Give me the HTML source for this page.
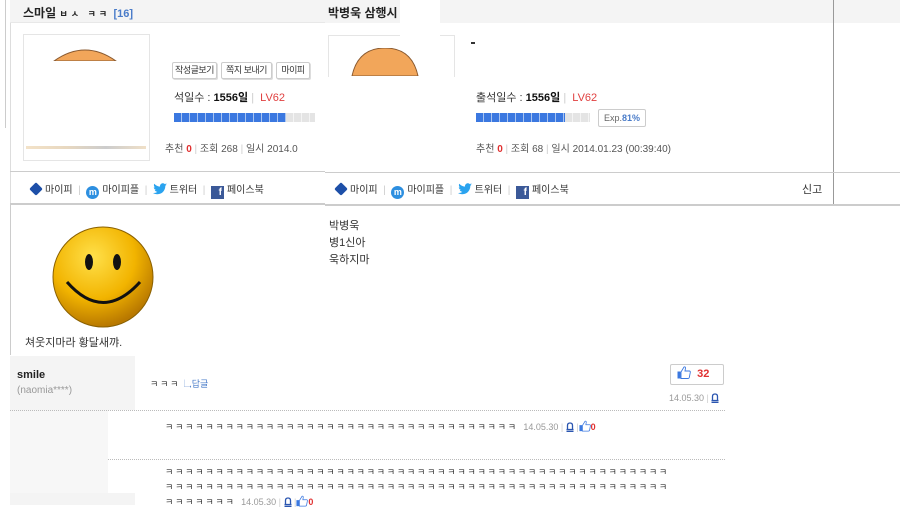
<!DOCTYPE html>
<html><head><meta charset="utf-8">
<style>
*{margin:0;padding:0;box-sizing:border-box}
body{width:900px;height:505px;overflow:hidden;background:#fff;position:relative;font-family:"Liberation Sans","Noto Sans CJK KR","NanumGothic",sans-serif;font-size:11px;color:#333}
.a{position:absolute;white-space:nowrap}
.bar{position:absolute;height:9px;background:repeating-linear-gradient(90deg,#3b78e0 0 7px,#a9c4f0 7px 8px)}
.bare{position:absolute;height:9px;background:repeating-linear-gradient(90deg,#e4e4e4 0 7px,#f4f4f4 7px 8px)}
.btn{position:absolute;height:17px;border:1px solid #ccc;border-radius:2px;font-size:9px;line-height:15px;text-align:center;overflow:hidden;background:#fff;box-shadow:1px 1px 0 #ddd;letter-spacing:-.5px}
.sep{color:#ccc}
.cube{display:inline-block;width:12px;height:12px;background:#1d4fa8;border-radius:2px;transform:rotate(45deg) scale(.8);vertical-align:-2px;margin-right:3px}
.mi{display:inline-block;width:13px;height:13px;border-radius:50%;background:#2d8fe0;color:#fff;font-size:9px;line-height:12px;text-align:center;font-weight:bold;vertical-align:-2px;margin-right:3px}
.fb{display:inline-block;width:13px;height:13px;background:#3b5998;color:#fff;font-size:10px;line-height:14px;text-align:right;padding-right:2px;font-weight:bold;vertical-align:-2px;margin-right:3px}
.k{font-size:9px;letter-spacing:1.8px;color:#333}
.dot{position:absolute;height:0;border-top:1px dotted #bbb}
svg.i{vertical-align:-2px}
</style></head><body>
<svg width="0" height="0" style="position:absolute">
<defs>
<symbol id="tw" viewBox="0 0 14 12"><path d="M14 1.5c-.5.2-1 .4-1.6.4.6-.4 1-.9 1.2-1.5-.6.3-1.1.6-1.8.7C11.3.5 10.6.2 9.8.2 8.3.2 7 1.5 7 3c0 .2 0 .4.1.6C4.8 3.5 2.700 2.400 1.300.7 1 1.100.9 1.600.9 2.100c0 1 .5 1.800 1.200 2.300-.5 0-.9-.1-1.300-.3 0 1.400 1 2.500 2.200 2.800-.4.100-.9.100-1.300 0 .4 1.100 1.400 1.900 2.600 2C3.300 9.600 2 10 .700 10H0c1.200.8 2.700 1.200 4.300 1.200 5.200 0 8-4.300 8-8v-.4c.6-.4 1.100-.9 1.500-1.400z" fill="#2aa3ef"/></symbol>
<symbol id="th" viewBox="0 0 14 13"><rect x="0.5" y="5.5" width="3" height="7" fill="#3b78e0"/><path d="M4 6 L7 1 Q8.500 .500 8.500 2 L8 5 L12.500 5 Q13.500 5.200 13.300 6.300 L12.300 11.500 Q12 12.500 11 12.500 L4 12.500 Z" fill="#fff" stroke="#3b78e0" stroke-width="0.9"/></symbol>
<symbol id="bl" viewBox="0 0 8 10"><path d="M1.500 7.500 V3.500 Q1.500 1 4 1 Q6.500 1 6.500 3.500 V7.500 M0.500 7.500 H7.500 M0.500 9.300 H7.500" fill="none" stroke="#2a55b0" stroke-width="1.300"/></symbol>
</defs></svg>
<!-- header -->
<div class="a" style="left:10px;top:0;width:890px;height:23px;background:#f4f4f4"></div>
<div class="a" style="left:410px;top:0;width:30px;height:25px;background:#fff"></div>
<div class="a" style="left:10px;top:22px;width:315px;height:1px;background:#e8e8e8"></div>
<div class="a" style="left:23px;top:4px;font-size:12px;font-weight:bold;color:#222">스마일 <span style="font-size:9px;letter-spacing:3px">ㅂㅅ ㅋㅋ</span> <span style="color:#4a7cc9;font-size:11px">[16]</span></div>
<div class="a" style="left:328px;top:4px;font-size:12px;font-weight:bold;color:#222">박병욱 삼행시</div>
<!-- vertical lines -->
<div class="a" style="left:5px;top:0;width:1px;height:128px;background:#ccc"></div>
<div class="a" style="left:10px;top:23px;width:1px;height:180px;background:#ddd"></div>
<div class="a" style="left:10px;top:205px;width:1px;height:150px;background:#ccc"></div>
<div class="a" style="left:833px;top:0;width:1px;height:205px;background:#999"></div>
<!-- avatars -->
<div class="a" style="left:23px;top:34px;width:127px;height:127px;border:1px solid #e5e5e5"></div>
<svg class="a" style="left:50px;top:47px" width="70" height="14"><path d="M4 14 Q35 -8 66 14 Z" fill="#f2a65a" stroke="#8a5a30"/></svg>
<div class="a" style="left:26px;top:146px;width:120px;height:3px;background:linear-gradient(90deg,#f3e2c8,#e8d8c0,#ccc,#f0e0c8)"></div>
<div class="a" style="left:328px;top:35px;width:127px;height:42px;border:1px solid #e5e5e5;border-bottom:none"></div>
<div class="a" style="left:400px;top:0;width:40px;height:75px;background:#fff"></div>
<svg class="a" style="left:350px;top:48px" width="70" height="28"><path d="M2 28 Q8 0 35 0 Q62 0 68 28 Z" fill="#f2a65a" stroke="#8a5a30"/></svg>
<div class="a" style="left:471px;top:42px;width:4px;height:2px;background:#333"></div>
<!-- left info -->
<div class="btn" style="left:172px;top:62px;width:45px">작성글보기</div>
<div class="btn" style="left:221px;top:62px;width:51px">쪽지 보내기</div>
<div class="btn" style="left:276px;top:62px;width:34px">마이피</div>
<div class="a" style="left:174px;top:89px;font-size:11px">석일수 : <b style="color:#111">1556일</b> <span class="sep">|</span> &nbsp;<span style="color:#e04040">LV62</span></div>
<div class="bar" style="left:174px;top:113px;width:112px"></div>
<div class="bare" style="left:286px;top:113px;width:29px"></div>
<div class="a" style="left:165px;top:140px;font-size:10px;color:#555">추천 <b style="color:#e03030">0</b> <span class="sep">|</span> 조회 268 <span class="sep">|</span> 일시 2014.0</div>
<!-- right info -->
<div class="a" style="left:476px;top:89px;font-size:11px">출석일수 : <b style="color:#111">1556일</b> <span class="sep">|</span> &nbsp;<span style="color:#e04040">LV62</span></div>
<div class="bar" style="left:476px;top:113px;width:89px"></div>
<div class="bare" style="left:565px;top:113px;width:25px"></div>
<div class="a" style="left:598px;top:109px;height:18px;border:1px solid #ccc;border-radius:2px;padding:0 5px;font-size:9px;line-height:16px;color:#666">Exp.<b style="color:#4a7cc9">81%</b></div>
<div class="a" style="left:476px;top:140px;font-size:10px;color:#555">추천 <b style="color:#e03030">0</b> <span class="sep">|</span> 조회 68 <span class="sep">|</span> 일시 2014.01.23 (00:39:40)</div>
<!-- share bar -->
<div class="a" style="left:10px;top:171px;width:315px;height:1px;background:#ccc"></div>
<div class="a" style="left:325px;top:172px;width:575px;height:1px;background:#ccc"></div>
<div class="a" style="left:10px;top:203px;width:315px;height:2px;background:#ccc"></div>
<div class="a" style="left:325px;top:204px;width:575px;height:2px;background:#ccc"></div>
<div class="a" style="left:30px;top:181px;font-size:10px"><span class="cube"></span>마이피 <span class="sep">&nbsp;|&nbsp;</span> <span class="mi">m</span>마이피플 <span class="sep">&nbsp;|&nbsp;</span> <svg class="i" width="14" height="12"><use href="#tw"/></svg> 트위터 <span class="sep">&nbsp;|&nbsp;</span> <span class="fb">f</span>페이스북</div>
<div class="a" style="left:335px;top:181px;font-size:10px"><span class="cube"></span>마이피 <span class="sep">&nbsp;|&nbsp;</span> <span class="mi">m</span>마이피플 <span class="sep">&nbsp;|&nbsp;</span> <svg class="i" width="14" height="12"><use href="#tw"/></svg> 트위터 <span class="sep">&nbsp;|&nbsp;</span> <span class="fb">f</span>페이스북</div>
<div class="a" style="left:802px;top:181px;font-size:11px">신고</div>
<!-- smiley -->
<svg class="a" style="left:50px;top:225px" width="106" height="104">
<defs><radialGradient id="g" cx="40%" cy="30%" r="70%"><stop offset="0" stop-color="#ffe04a"/><stop offset=".6" stop-color="#f2b400"/><stop offset="1" stop-color="#b87800"/></radialGradient></defs>
<circle cx="53" cy="52" r="50" fill="url(#g)" stroke="#8a6000"/>
<ellipse cx="39" cy="37" rx="4" ry="8" fill="#111"/><ellipse cx="67" cy="37" rx="4" ry="8" fill="#111"/>
<path d="M17 57 Q53 98 90 57" fill="none" stroke="#111" stroke-width="3"/>
</svg>
<div class="a" style="left:25px;top:334px;font-size:11px">쳐웃지마라 황달새꺄.</div>
<div class="a" style="left:329px;top:218px;font-size:11px;line-height:17px">박병욱<br>병1신아<br>욱하지마</div>
<!-- comments -->
<div class="a" style="left:10px;top:356px;width:125px;height:54px;background:#f4f4f4"></div>
<div class="a" style="left:10px;top:410px;width:98px;height:83px;background:#f7f7f7"></div>
<div class="a" style="left:10px;top:493px;width:125px;height:12px;background:#f4f4f4"></div>
<div class="a" style="left:17px;top:369px;font-size:11px;font-weight:bold;color:#222">smile</div>
<div class="a" style="left:17px;top:385px;font-size:10px;color:#999">(naomia****)</div>
<div class="a" style="left:150px;top:377px"><span class="k">ㅋㅋㅋ</span> <span style="color:#4a7cc9;font-size:9px">↳답글</span></div>
<div class="a" style="left:670px;top:364px;width:54px;height:21px;border:1px solid #ccc;border-radius:2px;font-size:11px;line-height:19px;padding-left:6px"><svg class="i" width="14" height="13"><use href="#th"/></svg> &nbsp;<b style="color:#e03030">32</b></div>
<div class="a" style="left:669px;top:393px;font-size:9px;color:#999">14.05.30 <span class="sep">|</span> <svg class="i" width="8" height="10"><use href="#bl"/></svg></div>
<div class="dot" style="left:10px;top:410px;width:715px"></div>
<div class="a" style="left:165px;top:420px"><span class="k">ㅋㅋㅋㅋㅋㅋㅋㅋㅋㅋㅋㅋㅋㅋㅋㅋㅋㅋㅋㅋㅋㅋㅋㅋㅋㅋㅋㅋㅋㅋㅋㅋㅋㅋㅋ</span> <span style="font-size:9px;color:#999">&nbsp;14.05.30 <span class="sep">|</span> <svg class="i" width="8" height="10"><use href="#bl"/></svg> <span class="sep">|</span><svg class="i" width="12" height="12"><use href="#th"/></svg><b style="color:#e03030">0</b></span></div>
<div class="dot" style="left:108px;top:459px;width:617px"></div>
<div class="a" style="left:165px;top:465px;line-height:15px"><span class="k">ㅋㅋㅋㅋㅋㅋㅋㅋㅋㅋㅋㅋㅋㅋㅋㅋㅋㅋㅋㅋㅋㅋㅋㅋㅋㅋㅋㅋㅋㅋㅋㅋㅋㅋㅋㅋㅋㅋㅋㅋㅋㅋㅋㅋㅋㅋㅋㅋㅋㅋ<br>ㅋㅋㅋㅋㅋㅋㅋㅋㅋㅋㅋㅋㅋㅋㅋㅋㅋㅋㅋㅋㅋㅋㅋㅋㅋㅋㅋㅋㅋㅋㅋㅋㅋㅋㅋㅋㅋㅋㅋㅋㅋㅋㅋㅋㅋㅋㅋㅋㅋㅋ<br>ㅋㅋㅋㅋㅋㅋㅋ</span> <span style="font-size:9px;color:#999">&nbsp;14.05.30 <span class="sep">|</span> <svg class="i" width="8" height="10"><use href="#bl"/></svg> <span class="sep">|</span><svg class="i" width="12" height="12"><use href="#th"/></svg><b style="color:#e03030">0</b></span></div>
</body></html>
